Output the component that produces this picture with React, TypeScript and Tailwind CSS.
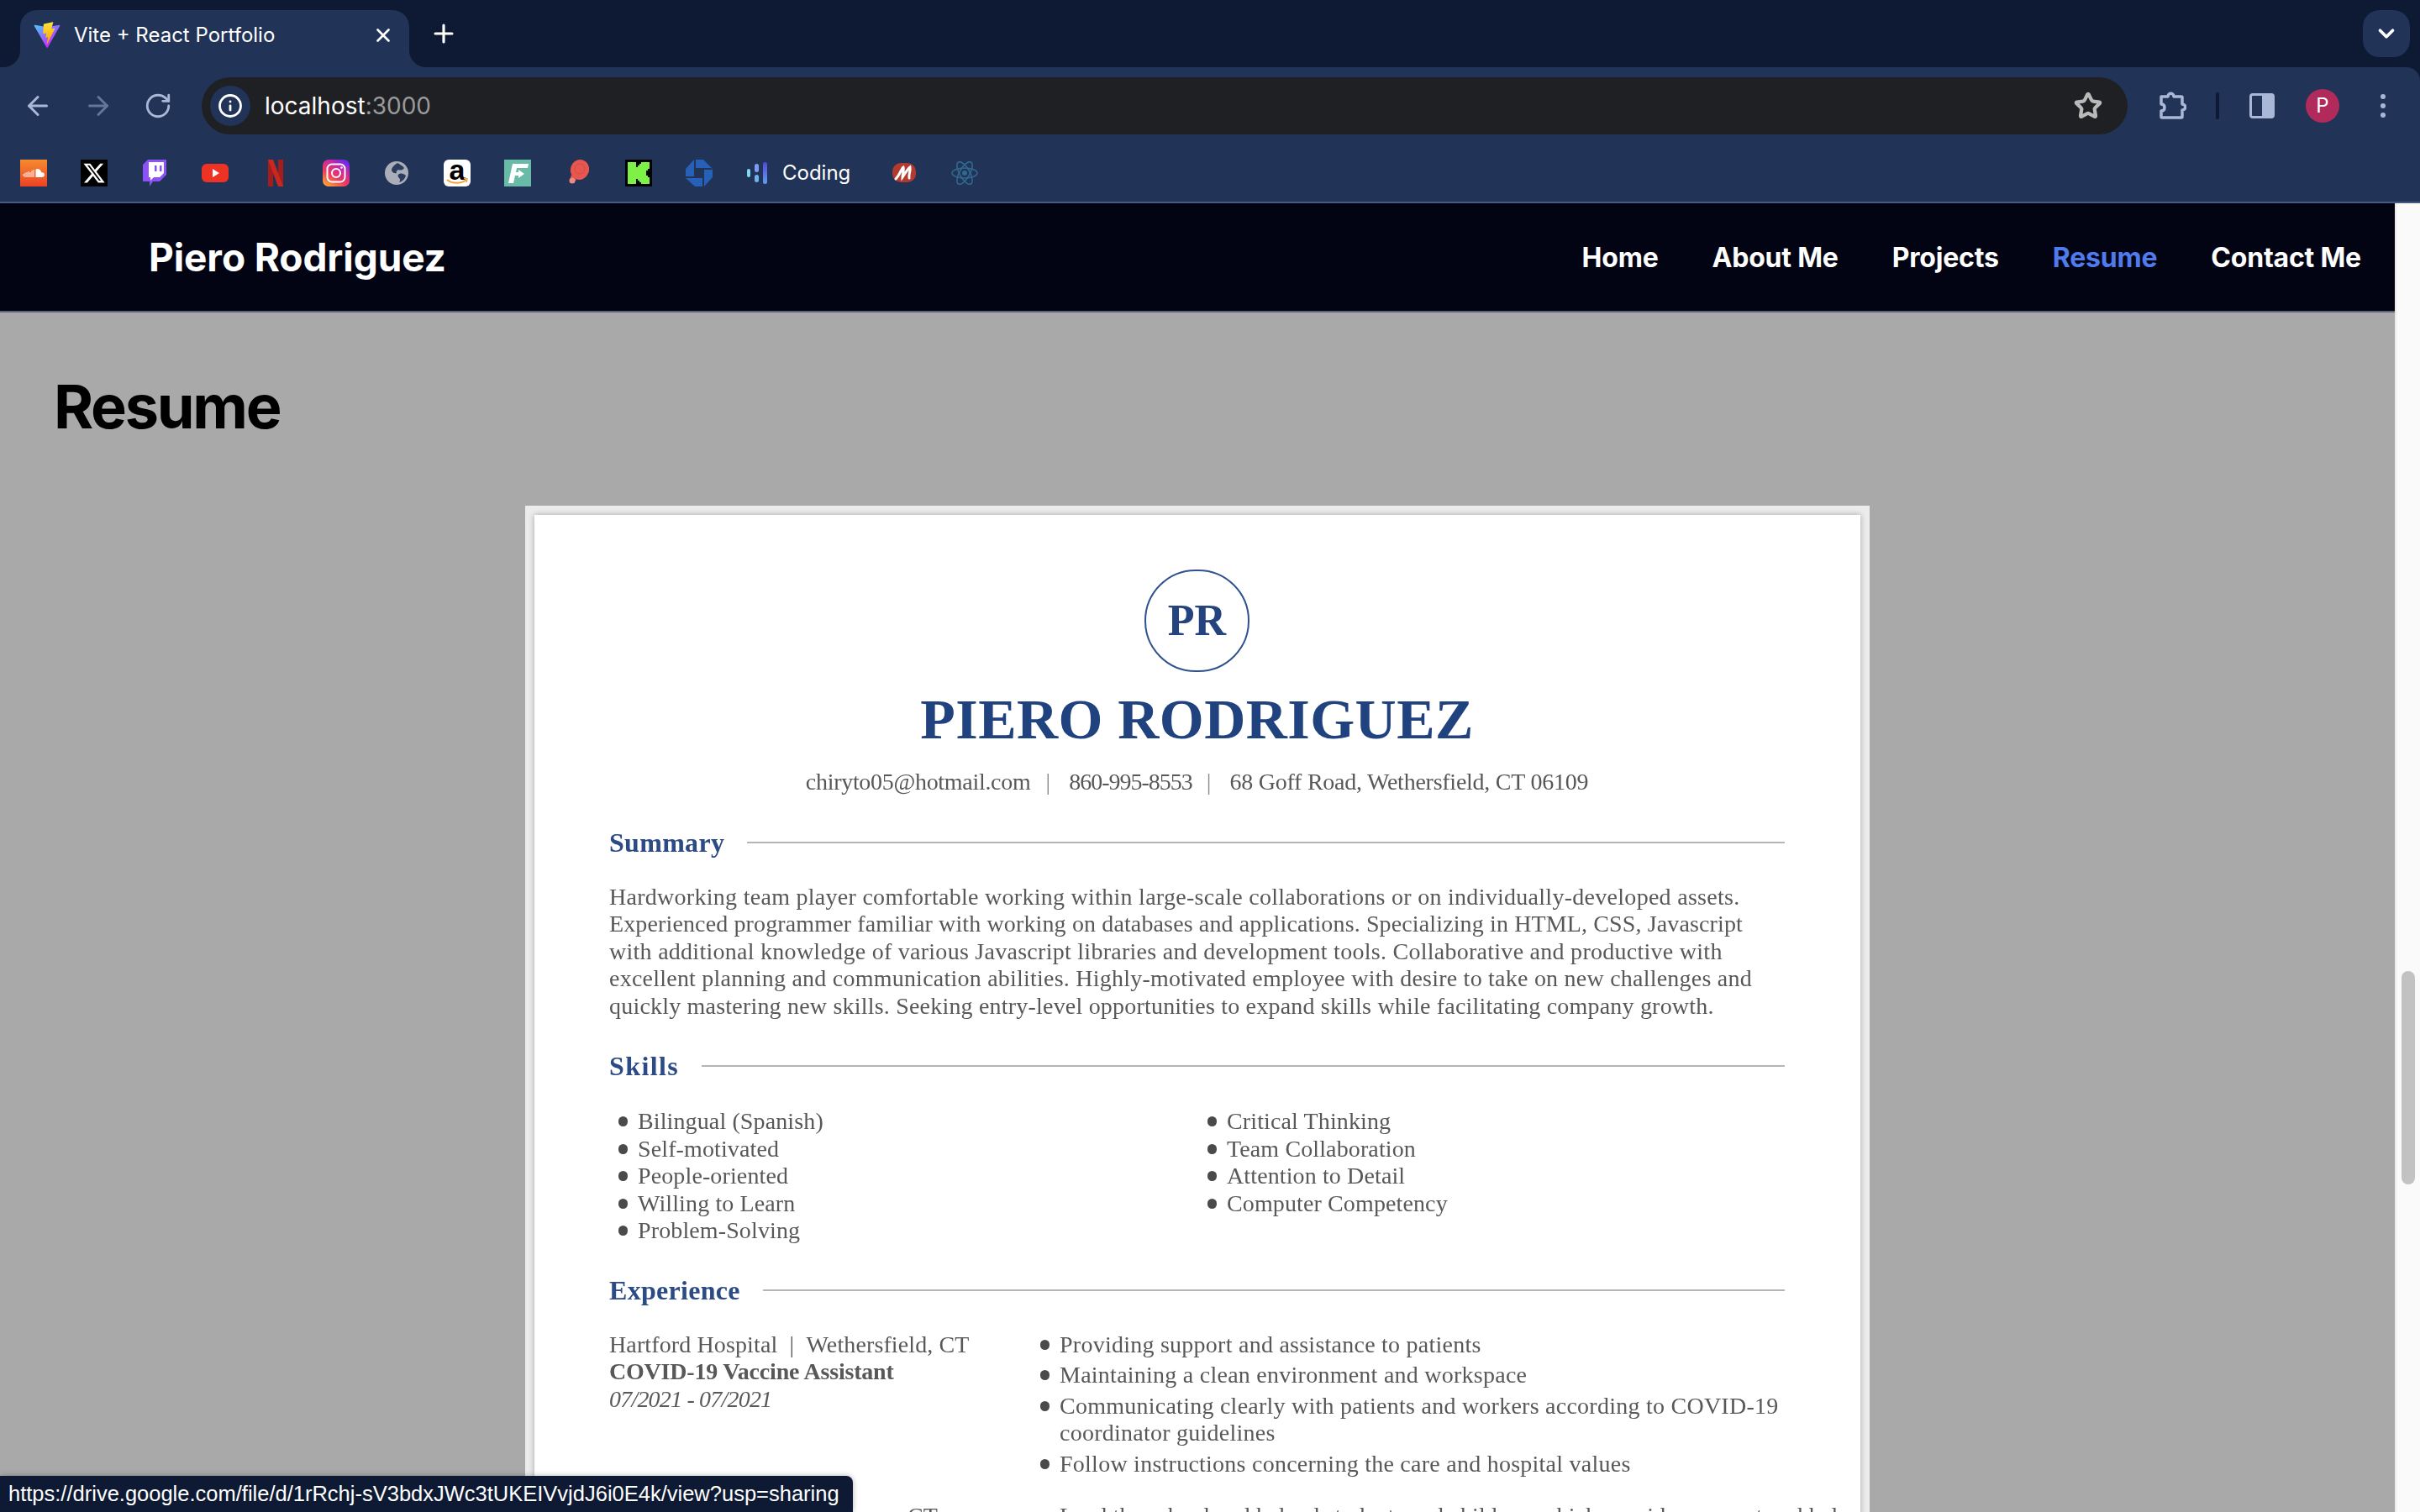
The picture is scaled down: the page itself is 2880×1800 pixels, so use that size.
import { ArrowLeft, ArrowRight, ChevronDown, Info, Plus, RotateCw, Star, X } from 'lucide-react';
import { FaXTwitter } from 'react-icons/fa6';

const serif = "font-['Liberation_Serif',serif]";

function ViteIcon() {
  return (
    <svg viewBox="0 0 410 404" className="w-8 h-8 shrink-0">
      <defs>
        <linearGradient id="vp" x1="6" y1="33" x2="235" y2="344" gradientUnits="userSpaceOnUse">
          <stop stopColor="#41D1FF" />
          <stop offset="1" stopColor="#BD34FE" />
        </linearGradient>
        <linearGradient id="vb" x1="194" y1="8" x2="236" y2="292" gradientUnits="userSpaceOnUse">
          <stop stopColor="#FFEA83" />
          <stop offset="0.08" stopColor="#FFDD35" />
          <stop offset="1" stopColor="#FFA800" />
        </linearGradient>
      </defs>
      <path fill="url(#vp)" d="M399.641 59.5246L215.643 388.545C211.844 395.338 202.084 395.378 198.228 388.618L10.5817 59.5563C6.38087 52.1896 12.6802 43.2665 21.0281 44.7586L205.223 77.6824C206.398 77.8924 207.601 77.8904 208.776 77.6763L389.119 44.8058C397.439 43.2894 403.768 52.1434 399.641 59.5246Z" />
      <path fill="url(#vb)" d="M292.965 1.5744L156.801 28.2552C154.563 28.6937 152.906 30.5903 152.771 32.8664L144.395 174.33C144.198 177.662 147.258 180.248 150.51 179.498L188.42 170.749C191.967 169.931 195.172 173.055 194.443 176.622L183.18 231.775C182.422 235.487 185.907 238.661 189.532 237.56L212.947 230.446C216.577 229.344 220.065 232.527 219.297 236.242L201.398 322.875C200.278 328.294 207.486 331.249 210.492 326.603L212.5 323.5L323.454 102.072C325.312 98.3645 322.108 94.137 318.036 94.9228L279.014 102.454C275.347 103.161 272.227 99.746 273.262 96.1583L298.731 7.86689C299.767 4.27314 296.636 0.855181 292.965 1.5744Z" />
    </svg>
  );
}

function SoundCloud() {
  return (
    <svg viewBox="0 0 32 32" className="w-8 h-8">
      <defs>
        <linearGradient id="sc" x1="0" y1="0" x2="0" y2="1">
          <stop stopColor="#f58b2f" />
          <stop offset="1" stopColor="#ee4224" />
        </linearGradient>
      </defs>
      <rect width="32" height="32" fill="url(#sc)" />
      <path fill="#fff" d="M20 11c3 0 5 2 5.400 4.400 2-.4 3.600 1 3.600 2.800S27.500 21 25.800 21H18.500V12c.4-.6 1-1 1.500-1z" />
      <path stroke="#fff" strokeWidth="1" d="M4 17v3M6 15.500V21M8 15v6M10 14v7M12 15v6M14 13v8M16 12v9" />
    </svg>
  );
}

function Twitch() {
  return (
    <svg viewBox="0 0 28 32" className="w-7 h-8">
      <path fill="#8c52f6" d="M6 0H28V18L20 26H12L8 32V26H0V6z" />
      <path fill="#fff" d="M7 3H25V16L20 21H13L9 25V21H7z" />
      <path fill="#8c52f6" d="M14 7h2.500v7H14zM20 7h2.500v7H20z" />
    </svg>
  );
}

function YouTube() {
  return (
    <svg viewBox="0 0 32 24" className="w-8 h-6">
      <rect y="1" width="32" height="22" rx="6" fill="#ee3224" />
      <path fill="#fff" d="M13 7l8 5-8 5z" />
    </svg>
  );
}

function Netflix() {
  return (
    <svg viewBox="0 0 18 32" className="w-[18px] h-8">
      <path fill="#a51d1a" d="M0 0h6v32H0zM12 0h6v32h-6z" />
      <path fill="#c8281f" d="M0 0h6l12 32h-6z" />
    </svg>
  );
}

function Instagram() {
  return (
    <svg viewBox="0 0 32 32" className="w-8 h-8">
      <defs>
        <linearGradient id="ig" x1="0.1" y1="1" x2="0.75" y2="0">
          <stop stopColor="#fbb034" />
          <stop offset="0.4" stopColor="#ee3a5c" />
          <stop offset="0.75" stopColor="#c628a8" />
          <stop offset="1" stopColor="#6a2bf0" />
        </linearGradient>
      </defs>
      <rect width="32" height="32" rx="7" fill="url(#ig)" />
      <rect x="5.500" y="5.500" width="21" height="21" rx="5.500" fill="none" stroke="#fff" strokeWidth="2" />
      <circle cx="16" cy="16" r="5" fill="none" stroke="#fff" strokeWidth="2" />
      <circle cx="22.500" cy="9.500" r="1.300" fill="#fff" />
    </svg>
  );
}

function Globe() {
  return (
    <svg viewBox="0 0 32 32" className="w-8 h-8">
      <circle cx="16" cy="16" r="14" fill="#a9aeb8" />
      <path fill="#2b3c5e" d="M17 4c3 2 6 3 8 6-2 3-5 3-7 2-2 1-3 3-2 4-3 1-5-1-6-3 0-4 3-6 7-9zM19 17c3-1 6 0 8 2-1 4-4 7-8 8 1-2 2-3 0-5-2-2-2-4 0-5z" />
    </svg>
  );
}

function Amazon() {
  return (
    <div className="relative w-8 h-8 rounded-[6px] bg-white overflow-hidden flex justify-center">
      <span className="font-['Liberation_Sans',sans-serif] font-bold text-black text-[34px] leading-[24px]">a</span>
      <svg viewBox="0 0 32 32" className="absolute inset-0 w-8 h-8">
        <path d="M4 24c6 5 17 5 23 0" fill="none" stroke="#f3a341" strokeWidth="2" />
        <path d="M24 22l4 1-1 4" fill="none" stroke="#f3a341" strokeWidth="1.500" />
      </svg>
    </div>
  );
}

function Fmovies() {
  return (
    <svg viewBox="0 0 32 32" className="w-8 h-8">
      <rect width="32" height="32" fill="#69bba7" />
      <path fill="#fff" d="M10 5H29L28 10H15L14 15H17V12L24 17L17 22V19H13L11 28H5z" />
    </svg>
  );
}

function RedBlob() {
  return (
    <svg viewBox="0 0 26 32" className="w-[26px] h-8">
      <ellipse cx="15" cy="12" rx="11" ry="12" fill="#e8574f" transform="rotate(20 15 12)" />
      <path fill="#e8574f" d="M5 18l6 6-4 4-4-3z" />
      <circle cx="6" cy="25" r="3.500" fill="#ec8b83" />
      <circle cx="15" cy="11" r="6" fill="none" stroke="#d34a44" strokeWidth="1" />
    </svg>
  );
}

function Kickstarter() {
  return (
    <svg viewBox="0 0 32 32" className="w-8 h-8" shapeRendering="crispEdges">
      <rect width="32" height="32" fill="#000" />
      <path fill="#7df145" d="M3 3H13V9H15V7H17V5H19V3H29V11H27V13H25V19H27V21H29V29H19V27H17V25H15V23H13V29H3z" />
    </svg>
  );
}

function Chase() {
  return (
    <svg viewBox="0 0 32 32" className="w-8 h-8">
      <g fill="#2661b7">
        <path d="M12 0h9l11 11v-1H12zM32 12v9L22 32V12zM20 32h-9L0 22h20zM0 20v-9L10 0v20z" />
      </g>
    </svg>
  );
}

function CodingMark() {
  return (
    <div className="flex items-center gap-[5px] w-[28px] h-8 pl-[1px]">
      <span className="w-[4px] h-[10px] rounded-full bg-[#7fd8f5]" />
      <div className="flex flex-col gap-[3px]">
        <span className="block w-[5px] h-[10px] rounded-full bg-[#7f9cf5]" />
        <span className="block w-[5px] h-[9px] rounded-full bg-[#6fb4f0]" />
      </div>
      <span className="w-[5px] h-[26px] rounded-full bg-gradient-to-b from-[#4f46d8] to-[#5f9cf0]" />
    </div>
  );
}

function MBadge() {
  return (
    <svg viewBox="0 0 30 28" className="w-[30px] h-7">
      <rect x="1" y="2" width="28" height="23" rx="10" fill="#b23a2e" />
      <path d="M5 21C10 16 12 8 14 7c1 3-1 9-1 12 3-4 6-10 9-12 1 4-2 9-1 13" fill="none" stroke="#fff" strokeWidth="3" strokeLinecap="round" />
    </svg>
  );
}

function ReactAtom() {
  return (
    <svg viewBox="0 0 32 32" className="w-8 h-8" fill="none" stroke="#31688f" strokeWidth="1.600">
      <ellipse cx="16" cy="16" rx="15" ry="6" />
      <ellipse cx="16" cy="16" rx="15" ry="6" transform="rotate(60 16 16)" />
      <ellipse cx="16" cy="16" rx="15" ry="6" transform="rotate(120 16 16)" />
      <circle cx="16" cy="16" r="3" fill="#31688f" stroke="none" />
    </svg>
  );
}

function Puzzle() {
  return (
    <svg viewBox="0 0 34 34" className="w-[34px] h-[34px]" fill="none" stroke="#a9b8d6" strokeWidth="3.500" strokeLinejoin="round">
      <path d="M4 6h8c0-5 7-5 7 0h9a1 1 0 0 1 1 1v8c5 0 5 7 0 7v8a1 1 0 0 1-1 1H5a1 1 0 0 1-1-1v-7c3 0 4-2 4-4s-1-4-4-4z" />
    </svg>
  );
}

function Chrome() {
  return (
    <div className="shrink-0 bg-[#0e1a33] font-['Inter',sans-serif]">
      <div className="h-20 relative flex items-end pl-6">
        <div className="w-[463px] h-[68px] rounded-t-[20px] bg-[#213357] flex items-center pl-4 pr-[18px] pb-[8px] relative">
          <ViteIcon />
          <span className="ml-4 text-[24px] text-white whitespace-nowrap">Vite + React Portfolio</span>
          <X size={26} strokeWidth={2.5} className="ml-auto text-white" />
          <span className="absolute -left-5 bottom-0 w-5 h-5 bg-[radial-gradient(circle_at_0_0,#0e1a33_19.500px,#213357_20.500px)]" />
          <span className="absolute -right-5 bottom-0 w-5 h-5 bg-[radial-gradient(circle_at_100%_0,#0e1a33_19.500px,#213357_20.500px)]" />
        </div>
        <Plus size={34} strokeWidth={2.25} className="ml-6 mb-[23px] text-white" />
        <div className="absolute right-3 top-3 w-14 h-14 rounded-[20px] bg-[#213357] flex items-center justify-center">
          <ChevronDown size={30} strokeWidth={3} className="text-white" />
        </div>
      </div>
      <div className="h-20 bg-[#213357] rounded-tr-[16px] flex items-center pt-3 pr-3">
        <div className="flex items-center w-[240px] pl-[27px] gap-[36px]">
          <ArrowLeft size={36} strokeWidth={2} className="text-[#a9b8d6]" />
          <ArrowRight size={36} strokeWidth={2} className="text-[#64779b]" />
          <RotateCw size={34} strokeWidth={2} className="text-[#a9b8d6]" />
        </div>
        <div className="w-[2292px] h-[68px] rounded-full bg-[#1f2024] flex items-center pl-[10px] pr-[30px]">
          <div className="w-12 h-12 rounded-full bg-[#213357] flex items-center justify-center">
            <Info size={30} strokeWidth={2.25} className="text-white" />
          </div>
          <span className="ml-[17px] text-[28px] text-white">
            localhost<span className="text-[#9a9a9a]">:3000</span>
          </span>
          <Star size={34} strokeWidth={3} className="ml-auto text-[#b9b9b9]" />
        </div>
        <div className="flex items-center flex-1 pl-[36px]">
          <Puzzle />
          <span className="w-1 h-8 ml-[35px] rounded-full bg-[#0e1a33]" />
          <div className="ml-[36px] w-[30px] h-[30px] rounded-[4px] border-[3px] border-[#a9b8d6] flex justify-end">
            <span className="w-[12px] bg-[#a9b8d6]" />
          </div>
          <div className="ml-[37px] w-10 h-10 rounded-full bg-[#b02a5b] flex items-center justify-center text-[24px] text-white">P</div>
          <div className="ml-[49px] flex flex-col gap-[5px]">
            <span className="w-[6px] h-[6px] rounded-full bg-[#a9b8d6]" />
            <span className="w-[6px] h-[6px] rounded-full bg-[#a9b8d6]" />
            <span className="w-[6px] h-[6px] rounded-full bg-[#a9b8d6]" />
          </div>
        </div>
      </div>
      <div className="h-[82px] bg-[#213357] flex items-center pt-3 pl-6 gap-10 border-b-2 border-[#445a80]">
        <span className="w-8 flex justify-center"><SoundCloud /></span>
        <span className="w-8 h-8 bg-black flex items-center justify-center text-white"><FaXTwitter size={28} /></span>
        <span className="w-8 flex justify-center"><Twitch /></span>
        <span className="w-8 flex justify-center"><YouTube /></span>
        <span className="w-8 flex justify-center"><Netflix /></span>
        <span className="w-8 flex justify-center"><Instagram /></span>
        <span className="w-8 flex justify-center"><Globe /></span>
        <span className="w-8 flex justify-center"><Amazon /></span>
        <span className="w-8 flex justify-center"><Fmovies /></span>
        <span className="w-8 flex justify-center"><RedBlob /></span>
        <span className="w-8 flex justify-center"><Kickstarter /></span>
        <span className="w-8 flex justify-center"><Chase /></span>
        <div className="flex items-center gap-[15px]">
          <CodingMark />
          <span className="text-[24px] text-white">Coding</span>
        </div>
        <span className="ml-[8px] w-8 flex justify-center"><MBadge /></span>
        <span className="w-8 flex justify-center"><ReactAtom /></span>
      </div>
    </div>
  );
}

function SectionHead({ title }: { title: string }) {
  return (
    <div className="flex items-center gap-[27px]">
      <h2 className="text-[32px] leading-[36px] font-bold text-[#2b4a86]">{title}</h2>
      <span className="flex-1 h-[2px] bg-[#b5b5b5]" />
    </div>
  );
}

function Dot({ label }: { label: string }) {
  return (
    <li className="flex">
      <span className="w-[11px] h-[12px] mt-[10px] mr-[12px] shrink-0 rounded-full bg-[#4a4a4a]" />
      <span>{label}</span>
    </li>
  );
}

const leftSkills = ['Bilingual (Spanish)', 'Self-motivated', 'People-oriented', 'Willing to Learn', 'Problem-Solving'];
const rightSkills = ['Critical Thinking', 'Team Collaboration', 'Attention to Detail', 'Computer Competency'];
const duties = [
  'Providing support and assistance to patients',
  'Maintaining a clean environment and workspace',
  'Communicating clearly with patients and workers according to COVID-19 coordinator guidelines',
  'Follow instructions concerning the care and hospital values',
];

function ResumeSheet() {
  return (
    <div className="w-[1600px] mx-auto mt-[74px] p-[11px] bg-[#ececec] shrink-0">
      <div className={`${serif} bg-white shadow-[0_0_7px_rgba(0,0,0,0.3)] pt-[65px] pl-[89px] pr-[90px] text-[#585858] text-[28px] leading-[32.500px] tracking-[0.12px] blur-[0.7px]`}>
        <div className="flex flex-col items-center">
          <div className="w-[125px] h-[122px] rounded-full border-2 border-[#2f5190] flex items-center justify-center text-[52px] font-bold text-[#24447f]">PR</div>
          <h1 className="mt-[18px] text-[68px] leading-[76px] font-bold text-[#20427f] tracking-[0.45px]">PIERO RODRIGUEZ</h1>
          <div className="mt-[21px] flex items-center">
            <span className="tracking-[-0.3px]">chiryto05@hotmail.com</span>
            <span className="ml-[18px] text-[#8a8a8a]">|</span>
            <span className="ml-[22px] tracking-[-1px]">860-995-8553</span>
            <span className="ml-[17px] text-[#8a8a8a]">|</span>
            <span className="ml-[22px] tracking-[-0.25px]">68 Goff Road, Wethersfield, CT 06109</span>
          </div>
        </div>
        <div className="mt-[37px] tracking-[0.3px]"><SectionHead title="Summary" /></div>
        <div className="mt-[31px]">
          <p className="tracking-[0.28px]">Hardworking team player comfortable working within large-scale collaborations or on individually-developed assets.</p>
          <p className="tracking-[0.13px]">Experienced programmer familiar with working on databases and applications. Specializing in HTML, CSS, Javascript</p>
          <p className="tracking-[0.27px]">with additional knowledge of various Javascript libraries and development tools. Collaborative and productive with</p>
          <p className="tracking-[0.23px]">excellent planning and communication abilities. Highly-motivated employee with desire to take on new challenges and</p>
          <p className="tracking-[0.2px]">quickly mastering new skills. Seeking entry-level opportunities to expand skills while facilitating company growth.</p>
        </div>
        <div className="mt-[37px] tracking-[1.4px]"><SectionHead title="Skills" /></div>
        <div className="mt-[32px] grid grid-cols-[712px_1fr]">
          <ul className="pl-[11px]">{leftSkills.map((s) => <Dot key={s} label={s} />)}</ul>
          <ul>{rightSkills.map((s) => <Dot key={s} label={s} />)}</ul>
        </div>
        <div className="mt-[36px] tracking-[0.3px]"><SectionHead title="Experience" /></div>
        <div className="mt-[31px] grid grid-cols-[513px_1fr]">
          <div>
            <p>Hartford Hospital&nbsp;&nbsp;|&nbsp;&nbsp;Wethersfield, CT</p>
            <p className="font-bold tracking-[-0.2px]">COVID-19 Vaccine Assistant</p>
            <p className="italic tracking-[-0.8px]">07/2021 - 07/2021</p>
          </div>
          <ul className="flex flex-col gap-[4px] tracking-[0.25px]">{duties.map((s) => <Dot key={s} label={s} />)}</ul>
        </div>
        <div className="mt-[30px] grid grid-cols-[513px_1fr]">
          <p className="pl-[355px]">CT</p>
          <p className="pl-[23px] whitespace-nowrap">Lead the school and helped students and children, which provides support and help</p>
        </div>
        <div className="h-40" />
      </div>
    </div>
  );
}

export default function App() {
  return (
    <div className="w-[2880px] h-[1800px] relative overflow-hidden flex flex-col font-['Inter',sans-serif]">
      <Chrome />
      <div className="flex flex-1 min-h-0">
        <main className="flex-1 min-w-0 flex flex-col overflow-hidden bg-[#a9a9a9]">
          <nav className="h-[130px] shrink-0 bg-[#020413] border-b-2 border-[#5a6577] flex items-center justify-between pl-[177px] pr-[40px]">
            <span className="text-[46px] font-bold text-white tracking-[-0.1px]">Piero Rodriguez</span>
            <div className="flex items-center gap-16 pt-[2px] text-[32px] font-bold text-white tracking-[-0.2px]">
              <span>Home</span>
              <span>About Me</span>
              <span>Projects</span>
              <span className="text-[#4f7bec]">Resume</span>
              <span>Contact Me</span>
            </div>
          </nav>
          <h1 className="mt-[68px] ml-16 text-[72px] leading-[88px] font-bold text-black tracking-[-2.3px]">Resume</h1>
          <ResumeSheet />
        </main>
        <div className="w-[30px] shrink-0 bg-[#fafafa] border-l-2 border-[#ebebeb] pt-[914px] pl-[6px]">
          <div className="w-4 h-[254px] rounded-full bg-[#c2c2c2]" />
        </div>
      </div>
      <div className="absolute left-0 bottom-0 w-[1015px] h-[43px] bg-[#0e1a33] rounded-tr-[8px] shadow-[0_0_6px_rgba(0,0,0,0.3)] flex items-center pl-[10px]">
        <span className="font-['Liberation_Sans',sans-serif] text-[25.500px] text-white whitespace-nowrap">https://drive.google.com/file/d/1rRchj-sV3bdxJWc3tUKEIVvjdJ6i0E4k/view?usp=sharing</span>
      </div>
    </div>
  );
}
